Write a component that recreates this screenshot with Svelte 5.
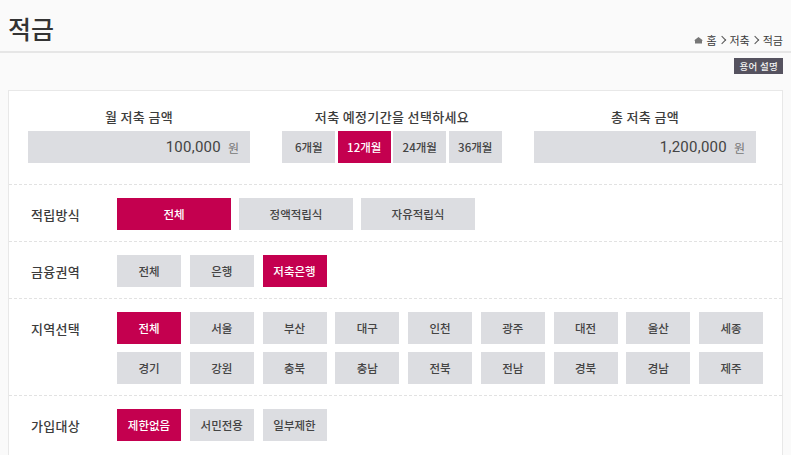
<script>
  const methods = [{ t: '전체', on: true }, { t: '정액적립식' }, { t: '자유적립식' }];
  const sectors = [{ t: '전체' }, { t: '은행' }, { t: '저축은행', on: true }];
  const regions = ['전체','서울','부산','대구','인천','광주','대전','울산','세종','경기','강원','충북','충남','전북','전남','경북','경남','제주'];
  const targets = [{ t: '제한없음', on: true }, { t: '서민전용' }, { t: '일부제한' }];
  const periods = [{ t: '6개월' }, { t: '12개월', on: true }, { t: '24개월' }, { t: '36개월' }];
</script>

<div class="page">
  <header class="head">
    <h1>적금</h1>
    <nav class="crumbs">
      <svg width="9" height="8" viewBox="0 0 9 8" aria-hidden="true"><path d="M4.5 1 L9 4.6 H8 V7.5 H1 V4.6 H0 Z" fill="#777"/></svg>
      <span>홈</span><i></i><span>저축</span><i></i><span>적금</span>
    </nav>
  </header>
  <div class="help"><span>용어 설명</span></div>

  <section class="panel">
    <div class="top">
      <div class="col amount">
        <h2>월 저축 금액</h2>
        <div class="box"><b>100,000</b><small>원</small></div>
      </div>
      <div class="col period">
        <h2>저축 예정기간을 선택하세요</h2>
        <div class="periods">
          {#each periods as p}
            <button class:on={p.on}>{p.t}</button>
          {/each}
        </div>
      </div>
      <div class="col amount">
        <h2>총 저축 금액</h2>
        <div class="box"><b>1,200,000</b><small>원</small></div>
      </div>
    </div>

    <div class="row">
      <div class="label">적립방식</div>
      <div class="opts wide">
        {#each methods as m}<button class:on={m.on}>{m.t}</button>{/each}
      </div>
    </div>
    <div class="row">
      <div class="label">금융권역</div>
      <div class="opts">
        {#each sectors as m}<button class:on={m.on}>{m.t}</button>{/each}
      </div>
    </div>
    <div class="row">
      <div class="label">지역선택</div>
      <div class="opts">
        {#each regions as r, i}<button class:on={i === 0}>{r}</button>{/each}
      </div>
    </div>
    <div class="row last">
      <div class="label">가입대상</div>
      <div class="opts">
        {#each targets as m}<button class:on={m.on}>{m.t}</button>{/each}
      </div>
    </div>
  </section>
</div>

<style>
  :global(html), :global(body) { margin: 0; background: #fff; height: 455px; overflow: hidden; }
  .page {
    width: 791px; height: 455px; overflow: hidden; background: #fafafa; color: #3a3a3a;
    font-family: "Noto Sans CJK KR", "Noto Sans", sans-serif;
  }
  .head {
    height: 51px; border-bottom: 2px solid #e6e6e6; display: flex; justify-content: space-between;
    align-items: flex-end; padding: 0 8px;
  }
  h1 { margin: 0 0 1px; font-size: 25px; line-height: 44px; font-weight: 500; color: #333; }
  .crumbs { display: flex; align-items: center; gap: 1px; font-size: 11px; line-height: 16px; color: #3a3a3a; margin-bottom: 3px; }
  .crumbs svg { margin-right: 2px; }
  .crumbs i {
    width: 5px; height: 5px; border-top: 1px solid #555; border-right: 1px solid #555;
    transform: rotate(45deg); margin: 0 4px 0 1px;
  }
  .help { display: flex; justify-content: flex-end; padding: 5px 8px 0 0; height: 37px; box-sizing: border-box; }
  .help span {
    background: #55525f; color: #f2f2f2; font-size: 9.5px; line-height: 16px; height: 16px;
    padding: 0 5px; font-weight: 500; letter-spacing: 0.3px;
  }
  .panel {
    margin: 0 0 0 8px; width: 775px; height: 376px; box-sizing: border-box; background: #fff;
    border: 1px solid #e8e8e8; border-bottom: 0;
  }
  .top { display: flex; padding: 0 26px 0 19px; justify-content: space-between; height: 93px; border-bottom: 1px dashed #e2e2e2; }
  .col { display: flex; flex-direction: column; align-items: center; padding-top: 17px; }
  h2 { margin: 0 0 6px; font-size: 13px; line-height: 17px; font-weight: 500; color: #3c3c3c; letter-spacing: 0.35px; }
  .amount { width: 222px; }
  .box {
    width: 222px; height: 32px; background: #dcdde1; display: flex; justify-content: flex-end; align-items: center;
    box-sizing: border-box; padding-right: 11px; gap: 7px;
  }
  .box b { font-family: "Roboto", "Noto Sans", sans-serif; font-weight: 400; font-size: 15px; letter-spacing: 0.25px; color: #444; }
  .box small { font-size: 12px; color: #777; }
  .periods { display: flex; gap: 2.5px; }
  .periods button { width: 53px; }
  .row { display: flex; border-bottom: 1px dashed #e2e2e2; padding: 13px 0 11px 22px; }
  .row.last { border-bottom: 0; }
  .label { width: 86px; height: 32px; flex: none; font-size: 13px; line-height: 34px; font-weight: 500; color: #3c3c3c; letter-spacing: 0.3px; }
  .opts { display: flex; flex-wrap: wrap; width: 648px; gap: 8px 8.75px; }
  .opts button { width: 64px; }
  .opts.wide { gap: 8px; }
  .opts.wide button { width: 114px; }
  button {
    height: 32px; padding: 0; border: 0; background: #dcdde1; color: #444; white-space: nowrap;
    font-family: inherit; font-size: 11.5px; font-weight: 500;
  }
  button.on { background: #c4004f; color: #fff; }
</style>
